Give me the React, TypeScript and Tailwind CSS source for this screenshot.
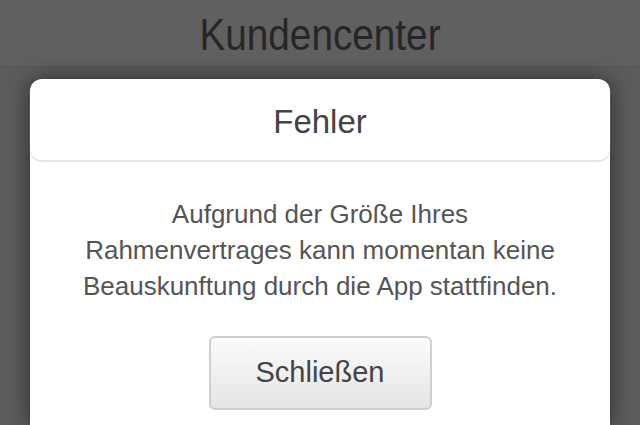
export default function App() {
  return (
    <div
      className="w-[640px] h-[425px] overflow-hidden bg-[#5c5c5c] flex flex-col"
      style={{ fontFamily: '"Liberation Sans", Arial, sans-serif' }}
    >
      {/* Header (dimmed by overlay) */}
      <header className="h-[67px] shrink-0 bg-[#606060] border-b border-[#565656] flex items-center justify-center">
        <h1 className="inline-block text-[44px] leading-none text-[#262626] pt-1 scale-x-[0.88]">
          Kundencenter
        </h1>
      </header>

      {/* Dialog */}
      <div className="px-[30px] pt-[12px] flex-1 flex flex-col">
        <div className="flex-1 bg-white rounded-t-[12px] shadow-[0_0_22px_rgba(0,0,0,0.55)] flex flex-col">
          <div className="h-[81px] rounded-[12px] shadow-[0_2px_1px_#e4e4e4] flex items-center justify-center">
            <h2 className="text-[33px] leading-none text-[#444444] pt-1">Fehler</h2>
          </div>
          <p className="mt-[36px] px-6 text-center text-[26px] leading-[36px] text-[#555555]">
            Aufgrund der Größe Ihres<br />
            Rahmenvertrages kann momentan keine<br />
            Beauskunftung durch die App stattfinden.
          </p>
          <div className="flex justify-center mt-[32px]">
            <button className="w-[223px] h-[74px] rounded-[6px] border-2 border-[#cfcfcf] bg-gradient-to-b from-[#fbfbfb] to-[#e5e5e5] text-[29px] text-[#444444] flex items-center justify-center">
              Schließen
            </button>
          </div>
        </div>
      </div>
    </div>
  );
}
